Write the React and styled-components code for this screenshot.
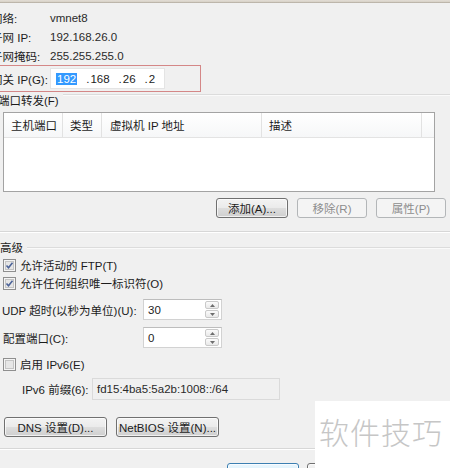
import React from 'react'
import styled, { createGlobalStyle, css } from 'styled-components'

const Global = createGlobalStyle`
  html, body { margin: 0; padding: 0; background: #f0f0f0; }
`

const Page = styled.div`
  position: relative;
  width: 450px;
  height: 468px;
  overflow: hidden;
  background: #f0f0f0;
  font-family: "Liberation Sans", "Noto Sans CJK SC", sans-serif;
  font-size: 11.5px;
  color: #1c1c1c;
`

const TopEdge = styled.div`
  height: 3px;
  background: linear-gradient(#e2ddd5, #d8d2c8 60%, #a9a195);
`

const InfoBlock = styled.div`
  margin-left: -9px;
  padding-top: 5px;
`

const InfoRow = styled.div`
  display: flex;
  align-items: center;
  height: 19px;
`

const Label = styled.span`
  flex: none;
  width: ${p => p.w || 59}px;
  padding-left: ${p => p.pad || 0}px;
  box-sizing: border-box;
  white-space: nowrap;
`

const Value = styled.span`
  color: #2a2a2a;
`

const GatewayBox = styled.div`
  display: flex;
  align-items: center;
  box-sizing: border-box;
  width: 211px;
  height: 27px;
  margin-left: -1px;
  border: 1px solid #d48787;
`

const IpInput = styled.div`
  display: flex;
  align-items: center;
  box-sizing: border-box;
  width: 115px;
  height: 21px;
  padding-left: 6px;
  background: #fff;
  border: 1px solid #e4e4e4;
`

const IpPart = styled.span`
  ${p => p.selected && css`
    background: #3399ff;
    color: #fff;
    padding: 0 1px;
    margin-left: -1px;
  `}
`

const IpDot = styled.span`
  margin: 0 1px 0 9px;
`

const GroupHeader = styled.div`
  display: flex;
  align-items: center;
  height: 16px;
  margin-left: ${p => p.offset || 0}px;
  margin-top: ${p => p.top || 0}px;
  margin-bottom: ${p => p.bottom || 0}px;
`

const GroupLine = styled.div`
  flex: 1;
  height: 1px;
  margin-left: 4px;
  background: #dcdcdc;
  box-shadow: 0 1px 0 #fafafa;
  align-self: ${p => p.high ? 'flex-start' : 'center'};
  margin-top: ${p => p.high ? 2 : 0}px;
`

const Table = styled.div`
  box-sizing: border-box;
  width: 432px;
  height: 80px;
  margin-left: 3px;
  background: #fff;
  border: 1px solid #a3a3a3;
`

const TableHead = styled.div`
  display: flex;
  height: 24px;
  background: linear-gradient(#ffffff, #f6f7f8);
  border-bottom: 1px solid #e3e3e3;
`

const HeadCell = styled.div`
  box-sizing: border-box;
  display: flex;
  align-items: center;
  flex: ${p => p.w ? 'none' : '1'};
  width: ${p => p.w ? `${p.w}px` : 'auto'};
  padding-left: ${p => p.pad || 7}px;
  border-right: ${p => p.w ? '1px solid #e2e2e2' : 'none'};
  white-space: nowrap;
`

const ButtonRow = styled.div`
  display: flex;
  justify-content: ${p => p.end ? 'flex-end' : 'flex-start'};
  gap: ${p => p.gap || 9}px;
  margin-top: ${p => p.top || 0}px;
  padding-right: ${p => p.right || 0}px;
  padding-left: ${p => p.left || 0}px;
`

const Button = styled.button`
  box-sizing: border-box;
  flex: none;
  width: ${p => p.w}px;
  height: ${p => p.h || 20}px;
  padding: 0;
  font: inherit;
  color: #1c1c1c;
  border: 1px solid #707070;
  border-radius: 3px;
  background: linear-gradient(#f3f3f3, #ebebeb 48%, #dddddd 52%, #cfcfcf);
  box-shadow: inset 0 0 0 1px rgba(255, 255, 255, 0.7);
  ${p => p.disabled && css`
    color: #8d8d8d;
    border-color: #b3b6b8;
    background: #f4f4f4;
    box-shadow: none;
  `}
  ${p => p.primary && css`
    border-color: #3c7fb1;
    background: linear-gradient(#eaf6fd, #d9f0fc 48%, #bee6fd 52%, #a7d9f5);
  `}
`

const Separator = styled.div`
  height: 1px;
  margin-top: ${p => p.top || 0}px;
  background: #d7d7d7;
  box-shadow: 0 1px 0 #ffffff;
`

const CheckRow = styled.label`
  display: flex;
  align-items: center;
  gap: 4px;
  height: 18px;
  padding-left: 3px;
  margin-top: ${p => p.top || 0}px;
`

const FieldRow = styled.div`
  display: flex;
  align-items: center;
  margin-top: ${p => p.top || 0}px;
  padding-left: ${p => p.left || 0}px;
`

const SpinBox = styled.div`
  box-sizing: border-box;
  display: flex;
  align-items: center;
  width: 79px;
  height: 21px;
  padding: 1px 2px 1px 4px;
  background: #fff;
  border: 1px solid #d2d2d2;
  border-top-color: #bdbdbd;
`

const SpinValue = styled.span`
  flex: 1;
`

const Spinner = styled.div`
  display: flex;
  flex-direction: column;
  gap: 1px;
  width: 14px;
  height: 17px;
`

const SpinButton = styled.div`
  flex: 1;
  display: flex;
  align-items: center;
  justify-content: center;
  border: 1px solid #c9c9c9;
  border-radius: 2px;
  background: linear-gradient(#fbfbfb, #e9e9e9);
`

const ReadOnlyBox = styled.div`
  box-sizing: border-box;
  display: flex;
  align-items: center;
  width: 188px;
  height: 22px;
  padding-left: 4px;
  border: 1px solid #dadada;
  color: #2a2a2a;
`

const Watermark = styled.div`
  position: absolute;
  right: 0;
  bottom: 0;
  width: 135px;
  height: 67px;
  box-sizing: border-box;
  padding: 10px 0 0 4px;
  background: #fff;
  font-family: "Noto Sans CJK SC", sans-serif;
  font-size: 30px;
  font-weight: 300;
  letter-spacing: 1px;
  line-height: 40px;
  color: #c6c6c6;
  white-space: nowrap;
`

function CheckBox ({ checked }) {
  return (
    <svg width="13" height="13" viewBox="0 0 13 13">
      <rect x="0.5" y="0.5" width="12" height="12" fill="#f4f4f4" stroke="#8f8f8f" />
      <rect x="2.5" y="2.5" width="8" height="8" fill="#e6e6e6" stroke="#c4c4c4" />
      {checked && (
        <path d="M3.5 6.5 L5.5 8.8 L9.5 3.8" fill="none" stroke="#4c6398" strokeWidth="1.6" />
      )}
    </svg>
  )
}

function Arrow ({ down }) {
  return (
    <svg width="5" height="3" viewBox="0 0 5 3">
      <path d={down ? 'M0 0 H5 L2.5 3 Z' : 'M0 3 H5 L2.5 0 Z'} fill="#6d6d6d" />
    </svg>
  )
}

function Spin ({ value }) {
  return (
    <SpinBox>
      <SpinValue>{value}</SpinValue>
      <Spinner>
        <SpinButton><Arrow /></SpinButton>
        <SpinButton><Arrow down /></SpinButton>
      </Spinner>
    </SpinBox>
  )
}

export default function App () {
  return (
    <Page>
      <Global />
      <TopEdge />

      <InfoBlock>
        <InfoRow><Label>网络:</Label><Value>vmnet8</Value></InfoRow>
        <InfoRow><Label>子网 IP:</Label><Value>192.168.26.0</Value></InfoRow>
        <InfoRow><Label>子网掩码:</Label><Value>255.255.255.0</Value></InfoRow>
        <GatewayBox>
          <Label>网关 IP(G):</Label>
          <IpInput>
            <IpPart selected>192</IpPart>
            <IpDot>.</IpDot><IpPart>168</IpPart>
            <IpDot>.</IpDot><IpPart>26</IpPart>
            <IpDot>.</IpDot><IpPart>2</IpPart>
          </IpInput>
        </GatewayBox>
      </InfoBlock>

      <GroupHeader offset={-2} top={0} bottom={4}>
        <span>端口转发(F)</span>
        <GroupLine high />
      </GroupHeader>

      <Table>
        <TableHead>
          <HeadCell w={59}>主机端口</HeadCell>
          <HeadCell w={39}>类型</HeadCell>
          <HeadCell w={160} pad={8}>虚拟机 IP 地址</HeadCell>
          <HeadCell w={160}>描述</HeadCell>
          <HeadCell />
        </TableHead>
      </Table>

      <ButtonRow end top={6} right={4}>
        <Button w={72}>添加(A)...</Button>
        <Button w={70} disabled>移除(R)</Button>
        <Button w={70} disabled>属性(P)</Button>
      </ButtonRow>

      <Separator top={13} />

      <GroupHeader top={7}>
        <span>高级</span>
        <GroupLine />
      </GroupHeader>

      <CheckRow top={1}><CheckBox checked /><span>允许活动的 FTP(T)</span></CheckRow>
      <CheckRow><CheckBox checked /><span>允许任何组织唯一标识符(O)</span></CheckRow>

      <FieldRow top={7}>
        <Label w={143} pad={2}>UDP 超时(以秒为单位)(U):</Label>
        <Spin value="30" />
      </FieldRow>
      <FieldRow top={7}>
        <Label w={143} pad={3}>配置端口(C):</Label>
        <Spin value="0" />
      </FieldRow>

      <CheckRow top={7}><CheckBox /><span>启用 IPv6(E)</span></CheckRow>

      <FieldRow top={5} left={22}>
        <Label w={70}>IPv6 前缀(6):</Label>
        <ReadOnlyBox>fd15:4ba5:5a2b:1008::/64</ReadOnlyBox>
      </FieldRow>

      <ButtonRow top={17} left={4}>
        <Button w={103}>DNS 设置(D)...</Button>
        <Button w={103}>NetBIOS 设置(N)...</Button>
      </ButtonRow>

      <Separator top={11} />

      <ButtonRow top={14} left={227} gap={8}>
        <Button w={72} h={23} primary>确定</Button>
        <Button w={72} h={23}>取消</Button>
      </ButtonRow>

      <Watermark>软件技巧</Watermark>
    </Page>
  )
}
